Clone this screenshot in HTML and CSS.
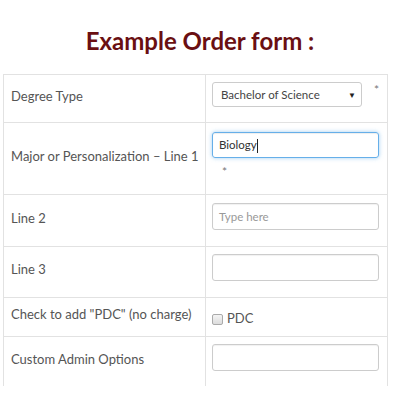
FILE: index.html
```html
<!DOCTYPE html>
<html>
<head>
<meta charset="utf-8">
<link rel="stylesheet" href="styles.css">
</head>
<body>
<h1 class="title">Example Order form :</h1>
<table class="form">
  <tr class="r1">
    <td class="label">Degree Type</td>
    <td class="value">
      <div class="selwrap">
        <div class="select"><span>Bachelor of Science</span><span class="arrow">&#9660;</span></div>
        <span class="req req-side">*</span>
      </div>
    </td>
  </tr>
  <tr class="r2">
    <td class="label">Major or Personalization &ndash; Line 1</td>
    <td class="value">
      <div class="input focus">Biology<span class="caret"></span></div>
      <div class="req req-below">*</div>
    </td>
  </tr>
  <tr class="r3">
    <td class="label">Line 2</td>
    <td class="value"><div class="input placeholder">Type here</div></td>
  </tr>
  <tr class="r4">
    <td class="label">Line 3</td>
    <td class="value"><div class="input"></div></td>
  </tr>
  <tr class="r5">
    <td class="label">Check to add "PDC" (no charge)</td>
    <td class="value mid"><span class="check"></span><span class="pdc">PDC</span></td>
  </tr>
  <tr class="r6">
    <td class="label">Custom Admin Options</td>
    <td class="value"><div class="input"></div></td>
  </tr>
</table>
</body>
</html>
```
FILE: styles.css
```css
html, body {
  margin: 0;
  padding: 0;
  background: #fff;
}
body {
  font-family: "Lato", "Open Sans", sans-serif;
  color: #555;
  width: 400px;
  height: 400px;
  overflow: hidden;
}
.title {
  margin: 0;
  padding-top: 26px;
  height: 74px;
  box-sizing: border-box;
  text-align: center;
  font-family: "Lato", sans-serif;
  font-weight: 700;
  font-size: 24px;
  line-height: 30px;
  color: #6a0f12;
}
.form {
  margin-left: 3px;
  border-collapse: collapse;
  width: 385px;
  table-layout: fixed;
}
.form td {
  border: 1px solid #e2e2e2;
  padding: 0;
  white-space: nowrap;
  box-sizing: border-box;
}
.label {
  width: 202px;
  padding-left: 7px !important;
  padding-bottom: 6px !important;
  font-size: 13px;
  vertical-align: middle;
  color: #555;
}
.value {
  vertical-align: top;
  padding-left: 6px !important;
  padding-right: 7px !important;
}
.value.mid { vertical-align: middle; padding-bottom: 2px; }
.r1 td { height: 48px; }
.r2 td { height: 72px; }
.r3 td { height: 52px; }
.r4 td { height: 51px; }
.r5 td { height: 39px; }
.r6 td { height: 49px; border-bottom-color: transparent; }
.r1 .value { padding-top: 7px; }
.r2 .value { padding-top: 9px; }
.r3 .value { padding-top: 8px; }
.r4 .value { padding-top: 7px; }
.r6 .value { padding-top: 7px; }
.r6 .label { vertical-align: top; padding-top: 14px; padding-bottom: 0 !important; }
.selwrap {
  display: flex;
  align-items: flex-start;
}
.select {
  width: 150px;
  height: 25px;
  box-sizing: border-box;
  border: 1px solid #ccc;
  border-radius: 3px;
  display: flex;
  align-items: center;
  justify-content: space-between;
  padding: 0 5px 0 8px;
  font-size: 11.5px;
  color: #444;
}
.arrow {
  font-size: 8px;
  color: #222;
}
.req {
  font-size: 12px;
  color: #777;
}
.req-side {
  margin-left: 12px;
}
.req-below {
  margin-left: 10px;
  margin-top: 7px;
  line-height: 14px;
}
.input {
  width: 167px;
  height: 27px;
  box-sizing: border-box;
  border: 1px solid #ccc;
  border-radius: 3px;
  box-shadow: inset 0 1px 1px rgba(0,0,0,0.06);
  font-size: 11.5px;
  padding: 0 6px;
  line-height: 25px;
  color: #333;
}
.input.focus {
  height: 26px;
  line-height: 24px;
  border-color: #66afe9;
  box-shadow: inset 0 1px 1px rgba(0,0,0,0.07), 0 0 4px rgba(102,175,233,0.6);
}
.caret {
  display: inline-block;
  width: 1px;
  height: 14px;
  background: #222;
  vertical-align: middle;
}
.placeholder { color: #999; }
.check {
  display: inline-block;
  width: 9px;
  height: 9px;
  border: 1px solid #aaa;
  border-radius: 2px;
  background: linear-gradient(#f4f4f4, #dcdcdc);
  vertical-align: middle;
  margin-right: 4px;
  position: relative;
  top: 2px;
}
.pdc {
  font-size: 13px;
  color: #555;
  vertical-align: middle;
}
```
